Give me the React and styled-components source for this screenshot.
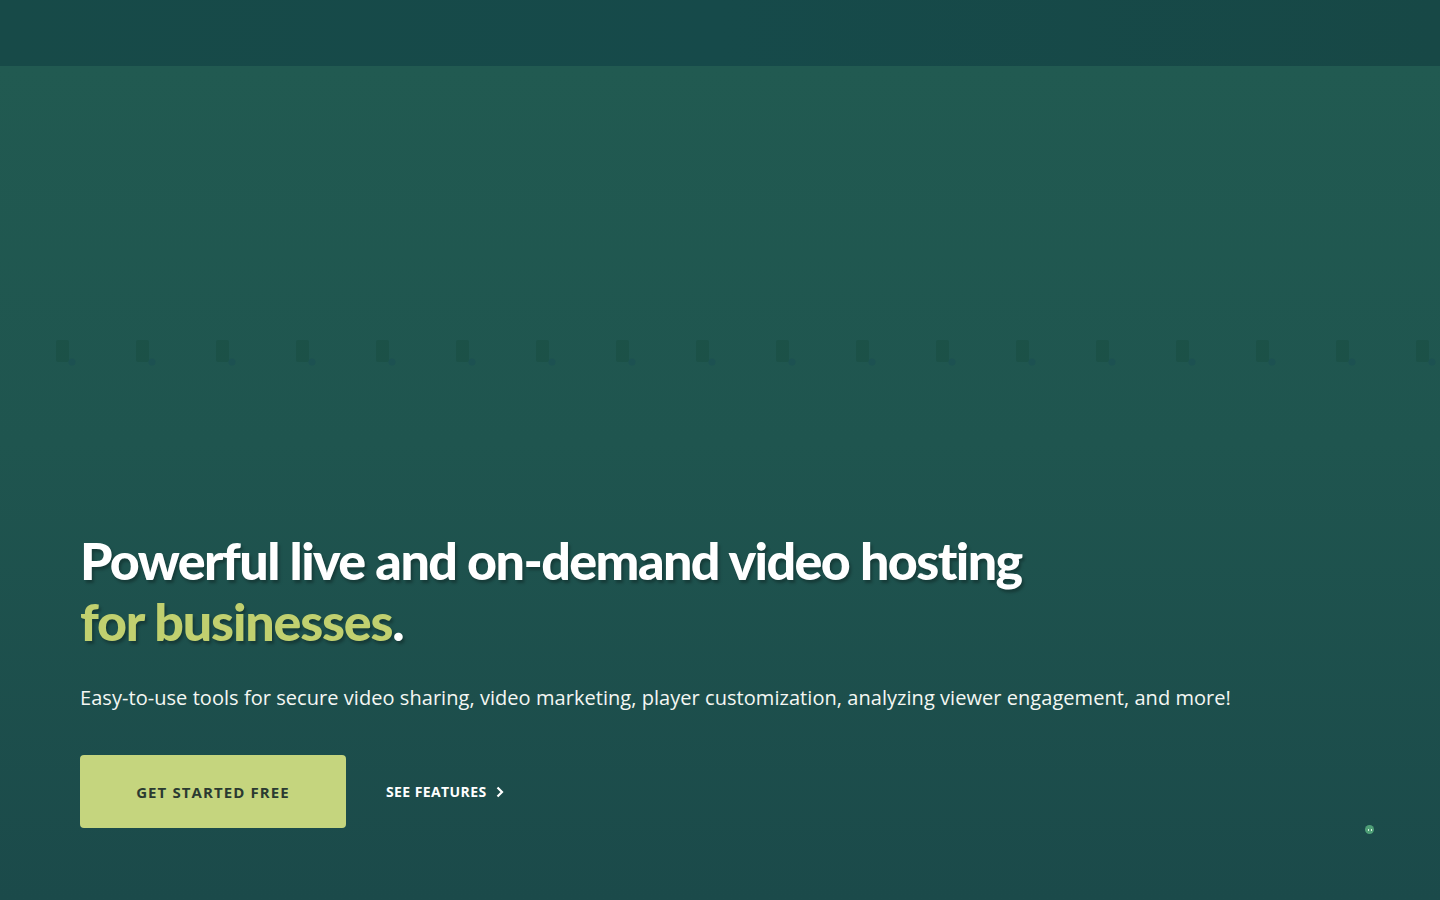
import React from "react";
import styled, { createGlobalStyle } from "styled-components";

const GlobalStyle = createGlobalStyle`
  html, body {
    margin: 0;
    padding: 0;
    background: #1b4a4a;
  }
  * { box-sizing: border-box; }
`;

const Page = styled.div`
  width: 100%;
  height: 900px;
  display: flex;
  flex-direction: column;
  overflow: hidden;
`;

const TopBar = styled.header`
  height: 66px;
  flex-shrink: 0;
  background: linear-gradient(90deg, #174a48 0%, #164a4a 50%, #174846 100%);
  box-shadow: 0 1px 0 rgba(0, 0, 0, 0.12);
`;

const Hero = styled.section`
  position: relative;
  flex: 1;
  display: flex;
  flex-direction: column;
  background: linear-gradient(180deg, #215a51 0%, #1f554f 45%, #1b4a4a 100%);
  padding: 0 80px;
`;

const Pattern = styled.div`
  display: flex;
  gap: 56px;
  margin-top: 270px;
  margin-left: -26px;
  height: 30px;
  opacity: 0.2;

  svg {
    flex-shrink: 0;
  }
`;

const Content = styled.div`
  margin-top: 164px;
  display: flex;
  flex-direction: column;
`;

const Title = styled.h1`
  margin: 0;
  font-family: Lato, "Open Sans", sans-serif;
  font-weight: 900;
  font-size: 52px;
  line-height: 61px;
  letter-spacing: -1.6px;
  color: #ffffff;
  text-shadow: 2px 3px 3px rgba(0, 0, 0, 0.28);
`;

const Accent = styled.span`
  color: #c1d06f;
  letter-spacing: -1.2px;
`;

const Lead = styled.p`
  margin: 32px 0 0;
  font-family: "Open Sans", "Noto Sans", sans-serif;
  font-size: 20px;
  line-height: 28px;
  color: #f4f7f3;
  letter-spacing: 0.05px;
`;

const Actions = styled.div`
  display: flex;
  align-items: center;
  gap: 40px;
  margin-top: 43px;
`;

const PrimaryButton = styled.a`
  display: flex;
  align-items: center;
  justify-content: center;
  width: 266px;
  height: 73px;
  border-radius: 4px;
  background: #c5d57e;
  color: #2b3a31;
  font-family: "Open Sans", "Noto Sans", sans-serif;
  font-weight: 700;
  font-size: 15px;
  letter-spacing: 1.1px;
  text-decoration: none;
`;

const LinkButton = styled.a`
  display: flex;
  align-items: center;
  gap: 8px;
  color: #ffffff;
  font-family: "Open Sans", "Noto Sans", sans-serif;
  font-weight: 700;
  font-size: 14px;
  letter-spacing: 0.4px;
  text-decoration: none;
`;

const Bubble = styled.div`
  position: absolute;
  right: 66px;
  bottom: 66px;
  width: 9px;
  height: 9px;
  border-radius: 50%;
  background: #4f9f77;
  display: flex;
  align-items: center;
  justify-content: center;
  gap: 2px;
`;

const Eye = styled.span`
  width: 1px;
  height: 2px;
  background: #d8f2df;
`;

const Device = () => (
  <svg width="24" height="30" viewBox="0 0 24 30">
    <rect x="2" y="4" width="13" height="22" rx="2" fill="#0e3f2c" />
    <circle cx="18" cy="26" r="3.5" fill="#123e5a" />
  </svg>
);

const Chevron = () => (
  <svg width="10" height="12" viewBox="0 0 10 12">
    <path d="M2.5 1.5 L7 6 L2.5 10.5" fill="none" stroke="#ffffff" strokeWidth="2.2" />
  </svg>
);

export default function App() {
  return (
    <>
      <GlobalStyle />
      <Page>
        <TopBar />
        <Hero>
          <Pattern>
            {Array.from({ length: 18 }).map((_, i) => (
              <Device key={i} />
            ))}
          </Pattern>
          <Content>
            <Title>
              Powerful live and on-demand video hosting
              <br />
              <Accent>for businesses</Accent>.
            </Title>
            <Lead>
              Easy-to-use tools for secure video sharing, video marketing, player customization, analyzing viewer engagement, and more!
            </Lead>
            <Actions>
              <PrimaryButton href="#">GET STARTED FREE</PrimaryButton>
              <LinkButton href="#">
                SEE FEATURES <Chevron />
              </LinkButton>
            </Actions>
          </Content>
          <Bubble>
            <Eye />
            <Eye />
          </Bubble>
        </Hero>
      </Page>
    </>
  );
}
